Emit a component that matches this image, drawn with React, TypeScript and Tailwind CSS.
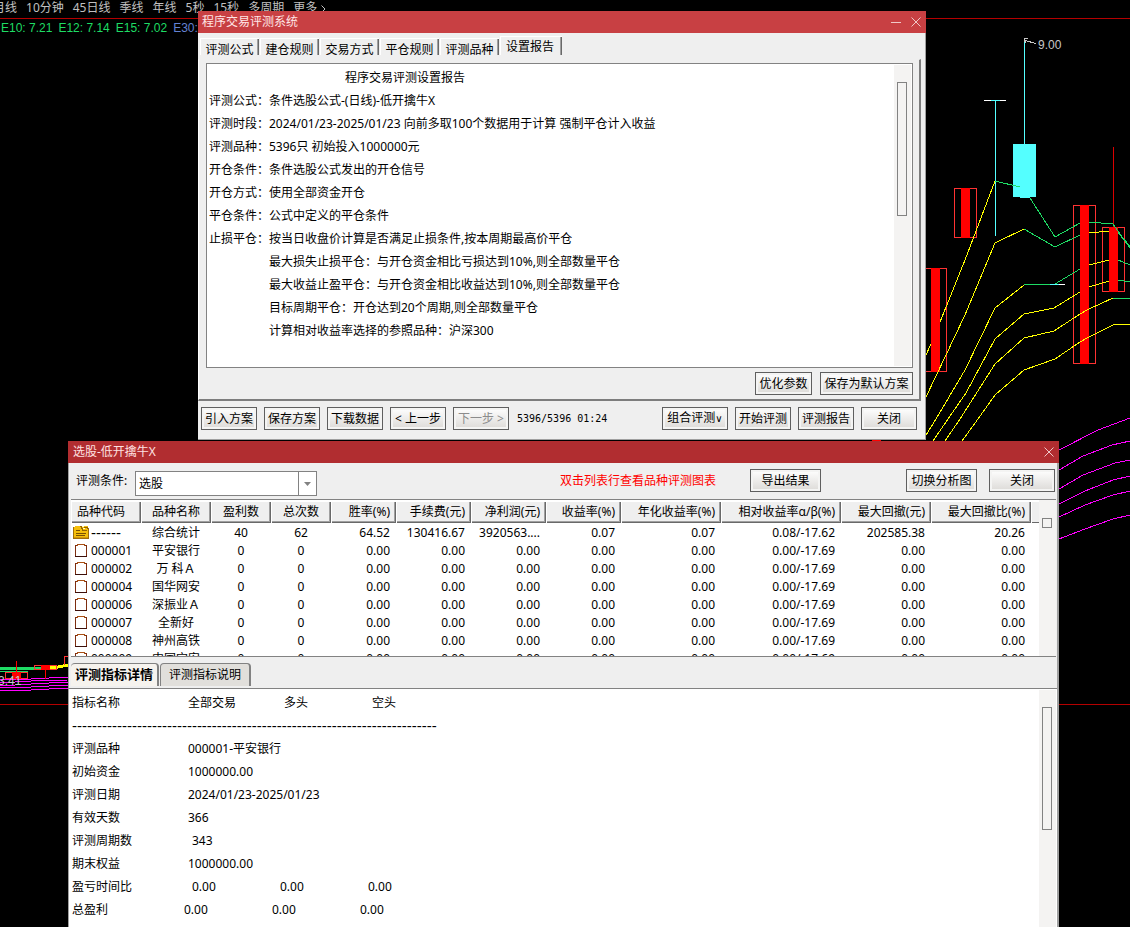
import React, { useState } from 'react';
import clsx from 'clsx';

interface StockRow {
  code: string;
  name: string;
  values: string[];
}

interface Column {
  title: string;
  width: string;
  align: string;
}

interface DetailRow {
  label: string;
  pad: string;
  values: string[];
}

const periods = ['月线', '10分钟', '45日线', '季线', '年线', '5秒', '15秒', '多周期', '更多'];

const setupTabs = ['评测公式', '建仓规则', '交易方式', '平仓规则', '评测品种', '设置报告'];

const reportLines = [
  ['评测公式：', '条件选股公式-(日线)-低开擒牛X'],
  ['评测时段：', '2024/01/23-2025/01/23 向前多取100个数据用于计算 强制平仓计入收益'],
  ['评测品种：', '5396只 初始投入1000000元'],
  ['开仓条件：', '条件选股公式发出的开仓信号'],
  ['开仓方式：', '使用全部资金开仓'],
  ['平仓条件：', '公式中定义的平仓条件'],
  ['止损平仓：', '按当日收盘价计算是否满足止损条件,按本周期最高价平仓'],
  ['', '最大损失止损平仓：与开仓资金相比亏损达到10%,则全部数量平仓'],
  ['', '最大收益止盈平仓：与开仓资金相比收益达到10%,则全部数量平仓'],
  ['', '目标周期平仓：开仓达到20个周期,则全部数量平仓'],
  ['', '计算相对收益率选择的参照品种：沪深300'],
];

const columns: Column[] = [
  { title: '品种代码', width: 'w-[70px]', align: 'text-left' },
  { title: '品种名称', width: 'w-[70px]', align: 'text-center' },
  { title: '盈利数', width: 'w-[60px]', align: 'text-center' },
  { title: '总次数', width: 'w-[60px]', align: 'text-center' },
  { title: '胜率(%)', width: 'w-[65px]', align: 'text-right' },
  { title: '手续费(元)', width: 'w-[75px]', align: 'text-right' },
  { title: '净利润(元)', width: 'w-[75px]', align: 'text-right' },
  { title: '收益率(%)', width: 'w-[75px]', align: 'text-right' },
  { title: '年化收益率(%)', width: 'w-[100px]', align: 'text-right' },
  { title: '相对收益率α/β(%)', width: 'w-[120px]', align: 'text-right' },
  { title: '最大回撤(元)', width: 'w-[90px]', align: 'text-right' },
  { title: '最大回撤比(%)', width: 'w-[100px]', align: 'text-right' },
];

const zeroValues = ['0', '0', '0.00', '0.00', '0.00', '0.00', '0.00', '0.00/-17.69', '0.00', '0.00'];

const rows: StockRow[] = [
  {
    code: '------',
    name: '综合统计',
    values: ['40', '62', '64.52', '130416.67', '3920563....', '0.07', '0.07', '0.08/-17.62', '202585.38', '20.26'],
  },
  { code: '000001', name: '平安银行', values: zeroValues },
  { code: '000002', name: '万 科Ａ', values: zeroValues },
  { code: '000004', name: '国华网安', values: zeroValues },
  { code: '000006', name: '深振业Ａ', values: zeroValues },
  { code: '000007', name: '全新好', values: zeroValues },
  { code: '000008', name: '神州高铁', values: zeroValues },
  { code: '000009', name: '中国宝安', values: zeroValues },
];

const details: DetailRow[] = [
  { label: '评测品种', pad: 'pl-1', values: ['000001-平安银行'] },
  { label: '初始资金', pad: 'pl-1', values: ['1000000.00'] },
  { label: '评测日期', pad: 'pl-1', values: ['2024/01/23-2025/01/23'] },
  { label: '有效天数', pad: 'pl-1', values: ['366'] },
  { label: '评测周期数', pad: 'pl-2', values: ['343'] },
  { label: '期末权益', pad: 'pl-1', values: ['1000000.00'] },
  { label: '盈亏时间比', pad: 'pl-2', values: ['0.00', '0.00', '0.00'] },
  { label: '总盈利', pad: 'pl-0', values: ['0.00', '0.00', '0.00'] },
];

const yellowLines = [
  '926,355 931,344',
  '940,322 965,260 995,181',
  '926,397 965,315 995,243 1024,229',
  '1089,233 1109,231',
  '926,435 936,419 965,370 995,308 1024,285',
  '1089,265 1109,260',
  '933,441 948,419 966,393 995,339 1024,314 1054,308 1080,292',
  '1089,287 1109,281',
  '945,441 960,419 995,364 1024,338 1054,331 1080,314 1089,309 1113,298',
  '962,441 978,419 995,395 1024,370 1055,359 1080,342 1089,337 1113,325 1130,324',
];

const greenLines = [
  '995,181 1020,187',
  '1030,198 1055,237 1080,223',
  '1089,222 1113,224 1130,248',
  '1024,229 1055,247 1080,235',
  '1118,233 1130,246',
  '1024,285 1055,284 1080,269',
  '1118,260 1130,265',
  '1118,280 1130,282',
  '1113,298 1130,299',
];

const magentaLines = [
  '1059,450 1098,430 1130,418',
  '1059,470 1083,456 1112,445 1130,441',
  '1059,489 1083,475 1115,463 1130,460',
  '1059,504 1085,491 1113,480 1130,476',
  '1059,517 1085,505 1113,495 1130,491',
  '1059,539 1085,529 1113,519 1130,515',
  '0,680 31,679 68,677',
  '0,683 31,681 68,680',
  '0,686 31,684 68,682',
  '0,688 31,687 68,685',
  '0,691 31,690 68,688',
];

// Red candle: hollow volume outline with a solid body inside
const RedCandle: React.FC<{ x: number; top: number; bottom: number }> = ({ x, top, bottom }) => (
  <g>
    <rect x={x + 0.5} y={top + 0.5} width={22} height={bottom - top - 1} fill="none" stroke="#ff3232" />
    <rect x={x + 7} y={top} width={9} height={bottom - top} fill="#ff0000" />
  </g>
);

const KLineChart: React.FC = () => (
  <svg className="absolute inset-0 h-full w-full" shapeRendering="crispEdges" aria-hidden="true">
    <g stroke="#b40000">
      <line x1="0" y1="18.5" x2="100%" y2="18.5" />
      <line x1="0" y1="704.5" x2="100%" y2="704.5" />
    </g>
    <g fill="none" stroke="#ff00ff">
      {magentaLines.map((points) => (
        <polyline key={points} points={points} />
      ))}
    </g>
    <rect x="1113" y="147" width="1" height="80" fill="#dc0000" />
    <RedCandle x={924} top={268} bottom={372} />
    <RedCandle x={954} top={188} bottom={238} />
    <RedCandle x={1073} top={205} bottom={364} />
    <RedCandle x={1102} top={227} bottom={292} />
    <rect x="872" y="440" width="9" height="1" fill="#ff0000" />

    <rect x="995" y="100" width="1" height="136" fill="#54ffff" />
    <rect x="984" y="100" width="22" height="1" fill="#ffffff" />
    <rect x="991" y="100" width="9" height="1" fill="#54ffff" />
    <rect x="1024" y="41" width="1" height="103" fill="#54ffff" />
    <rect x="1013" y="144" width="23" height="53" fill="#54ffff" />
    <rect x="1020" y="197" width="10" height="1" fill="#54ffff" />

    <g fill="none" stroke="#ffff00">
      {yellowLines.map((points) => (
        <polyline key={points} points={points} />
      ))}
    </g>
    <g fill="none" stroke="#1edc64">
      {greenLines.map((points) => (
        <polyline key={points} points={points} />
      ))}
    </g>
    <line x1="1050" y1="284.5" x2="1065" y2="284.5" stroke="#ffffff" />
    <line x1="1050" y1="284.5" x2="1059" y2="284.5" stroke="#54ffff" />

    <path d="M1036 43.5 L1025 40.5 M1028 38.5 H1024.5 V41 L1026 43" fill="none" stroke="#c8c8c8" />
    <text x="1038" y="49" fill="#c8c8c8" className="font-['Liberation_Sans',sans-serif] text-xs">9.00</text>

    {/* left edge, lows of the series */}
    <line x1="0" y1="668.5" x2="41" y2="668.5" stroke="#1edc64" strokeWidth="3" />
    <line x1="0" y1="671.5" x2="28" y2="671.5" stroke="#1edc64" />
    <polyline points="50,668 58,667 68,665" fill="none" stroke="#ffff00" strokeWidth="3" />
    <rect x="5.5" y="672.5" width="22" height="6" fill="none" stroke="#ff3232" />
    <rect x="34.5" y="665.5" width="22" height="4" fill="none" stroke="#ff3232" />
    <path d="M68 656.5 H64.5 V665" fill="none" stroke="#ff3232" />
    <rect x="12" y="672" width="9" height="7" fill="#ff0000" />
    <rect x="41" y="665" width="9" height="5" fill="#ff0000" />
    <rect x="16" y="661" width="1" height="19" fill="#ff0000" />
    <rect x="45" y="669" width="1" height="10" fill="#ff0000" />
    <text x="-2" y="685" fill="#c8c8c8" className="font-['Liberation_Sans',sans-serif] text-xs">3.41</text>
  </svg>
);

const CloseIcon: React.FC = () => (
  <svg className="h-2.5 w-2.5" viewBox="0 0 10 10" stroke="#f0c8c8" aria-hidden="true">
    <path d="M0.5 0.5 L9.5 9.5 M9.5 0.5 L0.5 9.5" />
  </svg>
);

const FolderIcon: React.FC = () => (
  <svg className="h-4 w-4 shrink-0" viewBox="0 0 16 16" shapeRendering="crispEdges" aria-hidden="true">
    <path d="M0 2 H2 V1 H15 V3 H16 V14 H0 Z" fill="#f5be0a" />
    <path d="M0.5 2 V13.5 H15.5 V3" fill="none" stroke="#a06e0a" />
    <path d="M1 12.5 H15" stroke="#d2960a" />
    <path d="M3 5.5 H7 M3 8.5 H13 M3 10.5 H12" stroke="#7a5000" />
    <path d="M7 1.5 H8 V3.5 H9 V5.5 H14 M11 2.5 H14 V4" fill="none" stroke="#966400" />
    <path d="M9 1.5 H11 M10 3.5 H12" stroke="#ffffc8" />
  </svg>
);

const ClipboardIcon: React.FC = () => (
  <svg className="h-4 w-4 shrink-0" viewBox="0 0 16 16" fill="none" shapeRendering="crispEdges" aria-hidden="true">
    <path d="M2.5 13 V2.5 H5 M11 2.5 H13.5 V13" stroke="#7d2d0f" />
    <path d="M4.5 3 V1.5 H11.5 V3" stroke="#aa5014" />
    <path d="M2 13.5 H14" stroke="#3c0f0a" />
  </svg>
);

interface PushButtonProps {
  className: string;
  disabled?: boolean;
  children: React.ReactNode;
}

const PushButton: React.FC<PushButtonProps> = ({ className, disabled, children }) => (
  <button
    type="button"
    disabled={disabled}
    className={clsx(
      'h-[23px] shrink-0 whitespace-nowrap border border-[#5f5f5f] bg-linear-to-b from-white to-[#dcdad7] text-center text-xs leading-5 text-black shadow-[inset_0_0_0_2px_#f4f4f3] disabled:text-[#8c8c8c]',
      className,
    )}
  >
    {children}
  </button>
);

const SetupWindow: React.FC = () => {
  const [activeTab, setActiveTab] = useState('设置报告');

  return (
    <section className="absolute left-[198px] top-[11px] w-[728px] border-b border-[#a0a0a0] bg-[#efefef]" aria-label="程序交易评测系统">
      <header className="flex h-[22px] items-center bg-[#c84043] pl-1 pr-[5px] text-[#ffe6e6]">
        <h1 className="flex-1">程序交易评测系统</h1>
        <button type="button" aria-label="最小化" className="mr-2.5 h-2.5 w-2.5">
          <span className="block h-px bg-[#f0c8c8]" />
        </button>
        <button type="button" aria-label="关闭窗口">
          <CloseIcon />
        </button>
      </header>

      <div className="border-r border-[#a0a0a0]">
        <div className="flex h-[22px] items-end pl-0.5" role="tablist">
          {setupTabs.map((tab) => (
            <button
              key={tab}
              type="button"
              role="tab"
              aria-selected={activeTab === tab}
              onClick={() => setActiveTab(tab)}
              className={clsx(
                'shrink-0 text-center shadow-[inset_1px_1px_0_#ffffff,inset_-1px_0_0_#696969,inset_-2px_0_0_#a0a0a0]',
                activeTab === tab ? 'h-[19px] w-[62px] pr-0.5 pt-0.5' : 'mr-px h-[17px] w-[59px] pt-1',
              )}
            >
              {tab}
            </button>
          ))}
        </div>

        <div className="mr-1 mt-1 border-b-2 border-r-2 border-[#7d7d7d] border-l border-t border-l-white border-t-[#efefef] pb-1 pl-[7px] pr-[6px] pt-[3px]">
          <div className="flex h-[305px] border border-[#828282] bg-white p-px">
            <div className="flex-1 pl-px pt-px leading-[23px]">
              <h2 className="pl-[136px]">程序交易评测设置报告</h2>
              <dl>
                {reportLines.map(([label, text]) => (
                  <div key={text} className="flex">
                    <dt className="w-[60px] shrink-0">{label}</dt>
                    <dd className="whitespace-nowrap">{text}</dd>
                  </div>
                ))}
              </dl>
            </div>
            <div className="w-[17px] bg-[#f4f3f2] pl-[3px] pt-[17px]">
              <div className="h-[134px] w-2.5 border border-[#828282]" />
            </div>
          </div>
          <div className="mt-1 flex justify-end gap-2">
            <PushButton className="w-[57px]">优化参数</PushButton>
            <PushButton className="w-[93px]">保存为默认方案</PushButton>
          </div>
        </div>

        <div className="flex items-center gap-[7px] pb-[9px] pl-[3px] pr-2 pt-[6px]">
          <PushButton className="w-14">引入方案</PushButton>
          <PushButton className="w-14">保存方案</PushButton>
          <PushButton className="w-14">下载数据</PushButton>
          <PushButton className="w-14">&lt; 上一步</PushButton>
          <PushButton className="w-14" disabled>下一步 &gt;</PushButton>
          <span className="flex-1 pl-px font-['DejaVu_Sans_Mono',monospace] text-[10px]">5396/5396 01:24</span>
          <PushButton className="w-[66px]">
            组合评测<span className="font-['DejaVu_Sans',sans-serif] text-[10px]">∨</span>
          </PushButton>
          <PushButton className="w-14">开始评测</PushButton>
          <PushButton className="w-14">评测报告</PushButton>
          <PushButton className="w-14">关闭</PushButton>
        </div>
      </div>
    </section>
  );
};

const StockTable: React.FC = () => (
  <div className="flex h-[158px] overflow-hidden border-y border-[#828282] bg-white">
    <div className="flex-1 overflow-hidden pt-px">
      <table className="w-full table-fixed border-collapse">
        <thead>
          <tr className="h-[22px]">
            {columns.map((col) => (
              <th
                key={col.title}
                scope="col"
                className={clsx(
                  'whitespace-nowrap bg-[#efefef] px-[6px] py-0 font-normal shadow-[inset_1px_1px_0_#ffffff,inset_-1px_-1px_0_#696969,inset_-2px_-2px_0_#a0a0a0]',
                  col.width,
                  col.align,
                )}
              >
                {col.title}
              </th>
            ))}
            <td className="bg-[#efefef] p-0 shadow-[inset_1px_1px_0_#ffffff,inset_0_-1px_0_#696969]" />
          </tr>
        </thead>
        <tbody>
          <tr className="h-px"><td colSpan={13} className="p-0" /></tr>
          {rows.map((row, index) => (
            <tr key={row.code} className="h-[18px]">
              <td className="p-0 pl-0.5">
                <div className="flex items-center gap-0.5">
                  {index === 0 ? <FolderIcon /> : <ClipboardIcon />}
                  <span className={clsx('leading-4', index === 0 && "font-['Liberation_Sans',sans-serif] text-[15px]")}>{row.code}</span>
                </div>
              </td>
              <td className="whitespace-nowrap p-0 text-center">{row.name}</td>
              {row.values.map((value, i) => (
                <td key={i} className={clsx('whitespace-nowrap px-[6px] py-0', columns[i + 2].align)}>
                  {value}
                </td>
              ))}
              <td />
            </tr>
          ))}
        </tbody>
      </table>
    </div>
    <div className="w-[17px] bg-[#f4f3f2] pl-[3px] pt-[18px]">
      <div className="h-2.5 w-2.5 border border-[#828282]" />
    </div>
  </div>
);

const ResultWindow: React.FC = () => (
  <section className="absolute bottom-0 left-[68px] top-[441px] flex w-[991px] flex-col bg-[#efefef]" aria-label="选股-低开擒牛X">
    <header className="flex h-[22px] shrink-0 items-center bg-[#b12d30] pl-[5px] pr-[5px] text-[#ffe1e1]">
      <h1 className="flex-1">选股-低开擒牛X</h1>
      <button type="button" aria-label="关闭窗口">
        <CloseIcon />
      </button>
    </header>

    <div className="flex flex-1 flex-col overflow-hidden border-l border-r-2 border-[#a0a0a0]">
      <div className="flex h-9 shrink-0 items-center pb-px pl-[7px] pr-0.5">
        <label htmlFor="condition" className="w-[59px]">评测条件:</label>
        <div className="mt-[6px] flex h-[25px] w-[182px] border border-[#828282] bg-white">
          <select id="condition" className="flex-1 appearance-none bg-white pl-[3px] outline-none">
            <option>选股</option>
          </select>
          <span className="flex w-[18px] items-center justify-center border-l border-[#828282]">
            <svg className="h-1 w-[7px]" viewBox="0 0 7 4" fill="#828282" aria-hidden="true">
              <path d="M0 0 H7 L3.5 4 Z" />
            </svg>
          </span>
        </div>
        <p className="ml-[243px] flex-1 text-[#ff0000]">双击列表行查看品种评测图表</p>
        <PushButton className="mr-[85px] w-[71px]">导出结果</PushButton>
        <PushButton className="mr-3 w-[71px]">切换分析图</PushButton>
        <PushButton className="w-[66px]">关闭</PushButton>
      </div>

      <div className="shrink-0 pl-0.5 pr-px">
        <StockTable />
      </div>

      <div className="flex h-[31px] shrink-0 items-end pb-0.5 pl-0.5" role="tablist">
        <button
          type="button"
          role="tab"
          aria-selected="true"
          className="h-[23px] w-[88px] rounded-t-sm border-r-2 border-t border-[#828282] bg-[#f6f3ee] text-[13px] font-bold"
        >
          评测指标详情
        </button>
        <button
          type="button"
          role="tab"
          aria-selected="false"
          className="ml-px h-[23px] w-[91px] rounded-t-sm border-l border-r-2 border-t border-[#828282] bg-[#e1dfdb]"
        >
          评测指标说明
        </button>
      </div>

      <div className="flex flex-1 overflow-hidden border-t border-[#828282] bg-white">
        <div className="flex-1 pl-[3px] pt-0.5">
          <table className="w-[368px] table-fixed border-collapse whitespace-nowrap text-left leading-[23px]">
            <thead>
              <tr>
                <th scope="col" className="w-28 p-0 font-normal">指标名称</th>
                <th scope="col" className="w-[88px] p-0 pl-1 font-normal">全部交易</th>
                <th scope="col" className="w-[88px] p-0 pl-3 font-normal">多头</th>
                <th scope="col" className="p-0 pl-3 font-normal">空头</th>
              </tr>
              <tr>
                <td colSpan={4} className="h-[23px] p-0 font-['Liberation_Sans',sans-serif] text-[15px]">
                  {'-'.repeat(73)}
                </td>
              </tr>
            </thead>
            <tbody>
              {details.map((row) => (
                <tr key={row.label}>
                  <th scope="row" className="p-0 font-normal">{row.label}</th>
                  {row.values.map((value, i) => (
                    <td key={i} colSpan={row.values.length === 1 ? 3 : 1} className={clsx('py-0 pr-0', row.pad)}>
                      {value}
                    </td>
                  ))}
                </tr>
              ))}
            </tbody>
          </table>
        </div>
        <div className="mr-px mt-px w-[17px] bg-[#f4f3f2] pl-[3px] pt-[17px]">
          <div className="h-[123px] w-2.5 border border-[#828282]" />
        </div>
      </div>
    </div>
  </section>
);

export default function App() {
  return (
    <main className="relative h-screen min-h-[600px] overflow-hidden bg-black font-['Noto_Sans','Noto_Sans_CJK_SC',sans-serif] text-xs text-black">
      <KLineChart />
      <nav className="relative -ml-[7px] flex h-4 items-center gap-[9px] whitespace-nowrap text-[#c0c0c0]" aria-label="周期">
        {periods.map((period) => (
          <button key={period} type="button">
            {period}
            {period === '更多' && (
              <svg className="ml-1 inline h-2 w-[5px]" viewBox="0 0 5 8" fill="none" stroke="currentColor" aria-hidden="true">
                <path d="M0.5 0.5 L4 4 L0.5 7.5" />
              </svg>
            )}
          </button>
        ))}
      </nav>
      <p className="relative flex gap-[6px] whitespace-nowrap pl-px pt-1 font-['Liberation_Sans',sans-serif] text-[#1edc64]">
        <span>E10: 7.21</span>
        <span>E12: 7.14</span>
        <span>E15: 7.02</span>
        <span className="text-[#6482d2]">E30:</span>
      </p>
      <SetupWindow />
      <ResultWindow />
    </main>
  );
}
